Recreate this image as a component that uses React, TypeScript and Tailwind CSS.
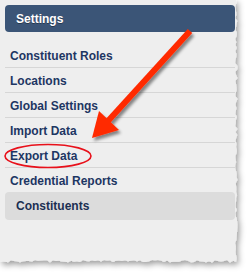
import React from 'react';

const items = ['Constituent Roles', 'Locations', 'Global Settings', 'Import Data', 'Export Data'];

// jagged torn-paper outline, deterministic
const tornPath = () => {
  let seed = 7;
  const rnd = () => {
    seed = (seed * 9301 + 49297) % 233280;
    return seed / 233280;
  };
  const pts: string[] = ['0,0', '236,0'];
  for (let y = 0; y <= 260; y += 3) pts.push(`${235 + rnd() * 2.5},${y}`);
  for (let x = 236; x >= 0; x -= 3) pts.push(`${x},${260 + rnd() * 2.5}`);
  pts.push('0,262');
  return 'M' + pts.join(' L') + ' Z';
};

const TornPaper = () => (
  <svg className="absolute inset-0" width={248} height={278}>
    <defs>
      <filter id="shadow" x="-10%" y="-10%" width="130%" height="130%">
        <feDropShadow dx="2" dy="3" stdDeviation="3" floodColor="#000" floodOpacity="0.4" />
      </filter>
    </defs>
    <path d={tornPath()} fill="#eeeeee" filter="url(#shadow)" />
  </svg>
);

const Annotation = () => (
  <svg className="absolute inset-0 pointer-events-none" width={248} height={278}>
    <defs>
      <filter id="ashadow" x="-20%" y="-20%" width="150%" height="150%">
        <feDropShadow dx="2" dy="3" stdDeviation="1.5" floodColor="#000" floodOpacity="0.45" />
      </filter>
    </defs>
    <g filter="url(#ashadow)">
      <line x1="190" y1="31" x2="108" y2="121" stroke="#ff2a00" strokeWidth="6" />
      <polygon points="92,138 99,111 119,130" fill="#ff2a00" />
    </g>
    <ellipse cx="48" cy="156" rx="43" ry="11.5" fill="none" stroke="#e8101a" strokeWidth="1.6" />
  </svg>
);

export default function App() {
  return (
    <div className="relative w-[248px] h-[278px] bg-white overflow-hidden font-['Liberation_Sans',Arial,sans-serif]">
      <TornPaper />
      <div className="relative flex flex-col w-[236px] pt-[5px] pl-[5px] pr-[1px]">
        <div className="h-[27px] rounded-[4px] bg-[#3b5577] flex items-center pl-[11px] text-[12px] font-bold text-white [text-shadow:0_1px_0_rgba(0,0,0,0.35)]">
          Settings
        </div>
        <div className="mt-[11px] flex flex-col">
          {items.map((label) => (
            <div
              key={label}
              className="h-[25px] flex items-center pl-[5px] pt-[1px] border-b border-[#d6d6d6] text-[12px] font-bold text-[#1d3663]"
            >
              {label}
            </div>
          ))}
          <div className="h-[24px] flex items-center pl-[5px] pt-[1px] text-[12px] font-bold text-[#1d3663]">
            Credential Reports
          </div>
        </div>
        <div className="h-[28px] rounded-[4px] bg-[#dcdcdc] flex items-center pl-[11px] text-[12px] font-bold text-[#1b2f52]">
          Constituents
        </div>
      </div>
      <Annotation />
    </div>
  );
}
